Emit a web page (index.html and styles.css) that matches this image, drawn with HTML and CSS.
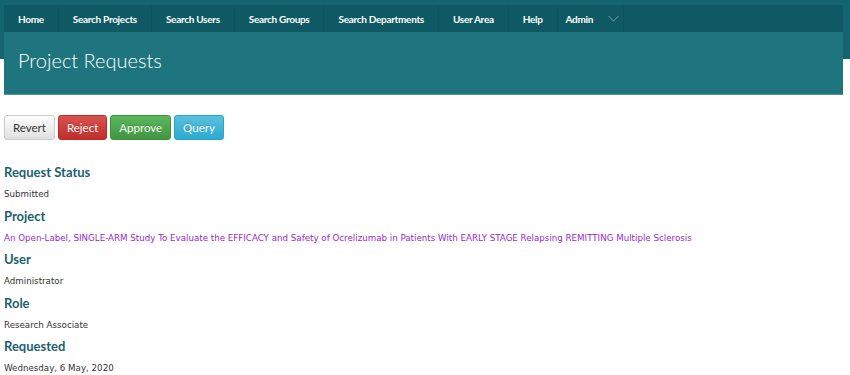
FILE: index.html
```html
<!DOCTYPE html>
<html lang="en">
<head>
  <meta charset="UTF-8" />
  <meta name="viewport" content="width=device-width, initial-scale=1.0" />
  <title>Project Requests</title>
  <link rel="stylesheet" href="styles.css">
</head>
<body>
  <div class="top">
    <ul class="nav">
      <li><a href="#">Home</a></li>
      <li><a href="#">Search Projects</a></li>
      <li><a href="#">Search Users</a></li>
      <li><a href="#">Search Groups</a></li>
      <li><a href="#">Search Departments</a></li>
      <li><a href="#">User Area</a></li>
      <li><a href="#">Help</a></li>
      <li class="dropdown">
        <a href="#">Admin</a>
        <span class="caret">
          <svg width="11" height="7" viewBox="0 0 11 7"><path d="M0.5 1 L5.5 6 L10.5 1" fill="none" stroke="#6fa3aa" stroke-width="1"/></svg>
        </span>
      </li>
    </ul>
    <div class="banner">
      <h1>Project Requests</h1>
    </div>
  </div>

  <div class="content">
    <div class="actions">
      <button class="btn btn-default">Revert</button>
      <button class="btn btn-danger">Reject</button>
      <button class="btn btn-success">Approve</button>
      <button class="btn btn-info">Query</button>
    </div>

    <h3>Request Status</h3>
    <p>Submitted</p>

    <h3>Project</h3>
    <p><a href="#" class="project-link">An Open-Label, SINGLE-ARM Study To Evaluate the EFFICACY and Safety of Ocrelizumab in Patients With EARLY STAGE Relapsing REMITTING Multiple Sclerosis</a></p>

    <h3>User</h3>
    <p>Administrator</p>

    <h3>Role</h3>
    <p>Research Associate</p>

    <h3>Requested</h3>
    <p>Wednesday, 6 May, 2020</p>
  </div>
</body>
</html>
```

FILE: styles.css
```css
body {
  margin: 0;
  font-family: "DejaVu Sans", Verdana, sans-serif;
  background: #fff;
  color: #333;
}

/* teal band only runs behind the nav and top of the banner */
.top {
  background: linear-gradient(#146570 0, #146570 59px, #fff 59px);
  padding: 5px 7px 0 4px;
}

.nav {
  list-style: none;
  margin: 0;
  padding: 0;
  display: flex;
  background: #0e5963;
  height: 27px;
}

.nav li {
  display: flex;
  align-items: center;
  border-right: 1px solid #0c5560;
}

.nav a {
  display: block;
  padding: 0 14px;
  color: #fff;
  text-decoration: none;
  font-family: Lato, "Open Sans", sans-serif;
  font-weight: 700;
  font-size: 10px;
  letter-spacing: -0.3px;
}

.nav .dropdown a {
  padding: 0 15px 0 8px;
}

.caret {
  display: flex;
  padding-right: 4px;
}

.banner {
  background: #1e757e;
  height: 63px;
  border-bottom: 1px solid #4e959c;
  padding: 16px 0 0 14px;
  box-sizing: border-box;
}

.banner h1 {
  margin: 0;
  color: #fff;
  font-family: Lato, "Open Sans", sans-serif;
  font-weight: 300;
  font-size: 20px;
  line-height: 24px;
}

.content {
  padding: 20px 4px 0;
}

.actions {
  display: flex;
  gap: 3px;
  margin-bottom: 22px;
}

.btn {
  height: 25px;
  padding: 0 8px;
  font-family: Lato, "Open Sans", sans-serif;
  font-size: 11.5px;
  border-radius: 3px;
  border: 1px solid transparent;
  color: #fff;
  text-shadow: 0 -1px 0 rgba(0,0,0,0.2);
}

.btn-default {
  color: #333;
  text-shadow: none;
  background: linear-gradient(#fff, #e0e0e0);
  border-color: #ccc;
}

.btn-danger {
  background: linear-gradient(#d9534f, #c12e2a);
  border-color: #b92c28;
}

.btn-success {
  background: linear-gradient(#5cb85c, #419641);
  border-color: #3e8f3e;
}

.btn-info {
  background: linear-gradient(#5bc0de, #2aabd2);
  border-color: #28a4c9;
}

h3 {
  margin: 0;
  font-family: Lato, "Open Sans", sans-serif;
  font-weight: 700;
  font-size: 13px;
  color: #1c5f6f;
  line-height: 21px;
}

p {
  margin: 0;
  font-size: 8.7px;
  line-height: 22.5px;
}

.project-link {
  color: #9b1fcf;
  text-decoration: none;
}
```
